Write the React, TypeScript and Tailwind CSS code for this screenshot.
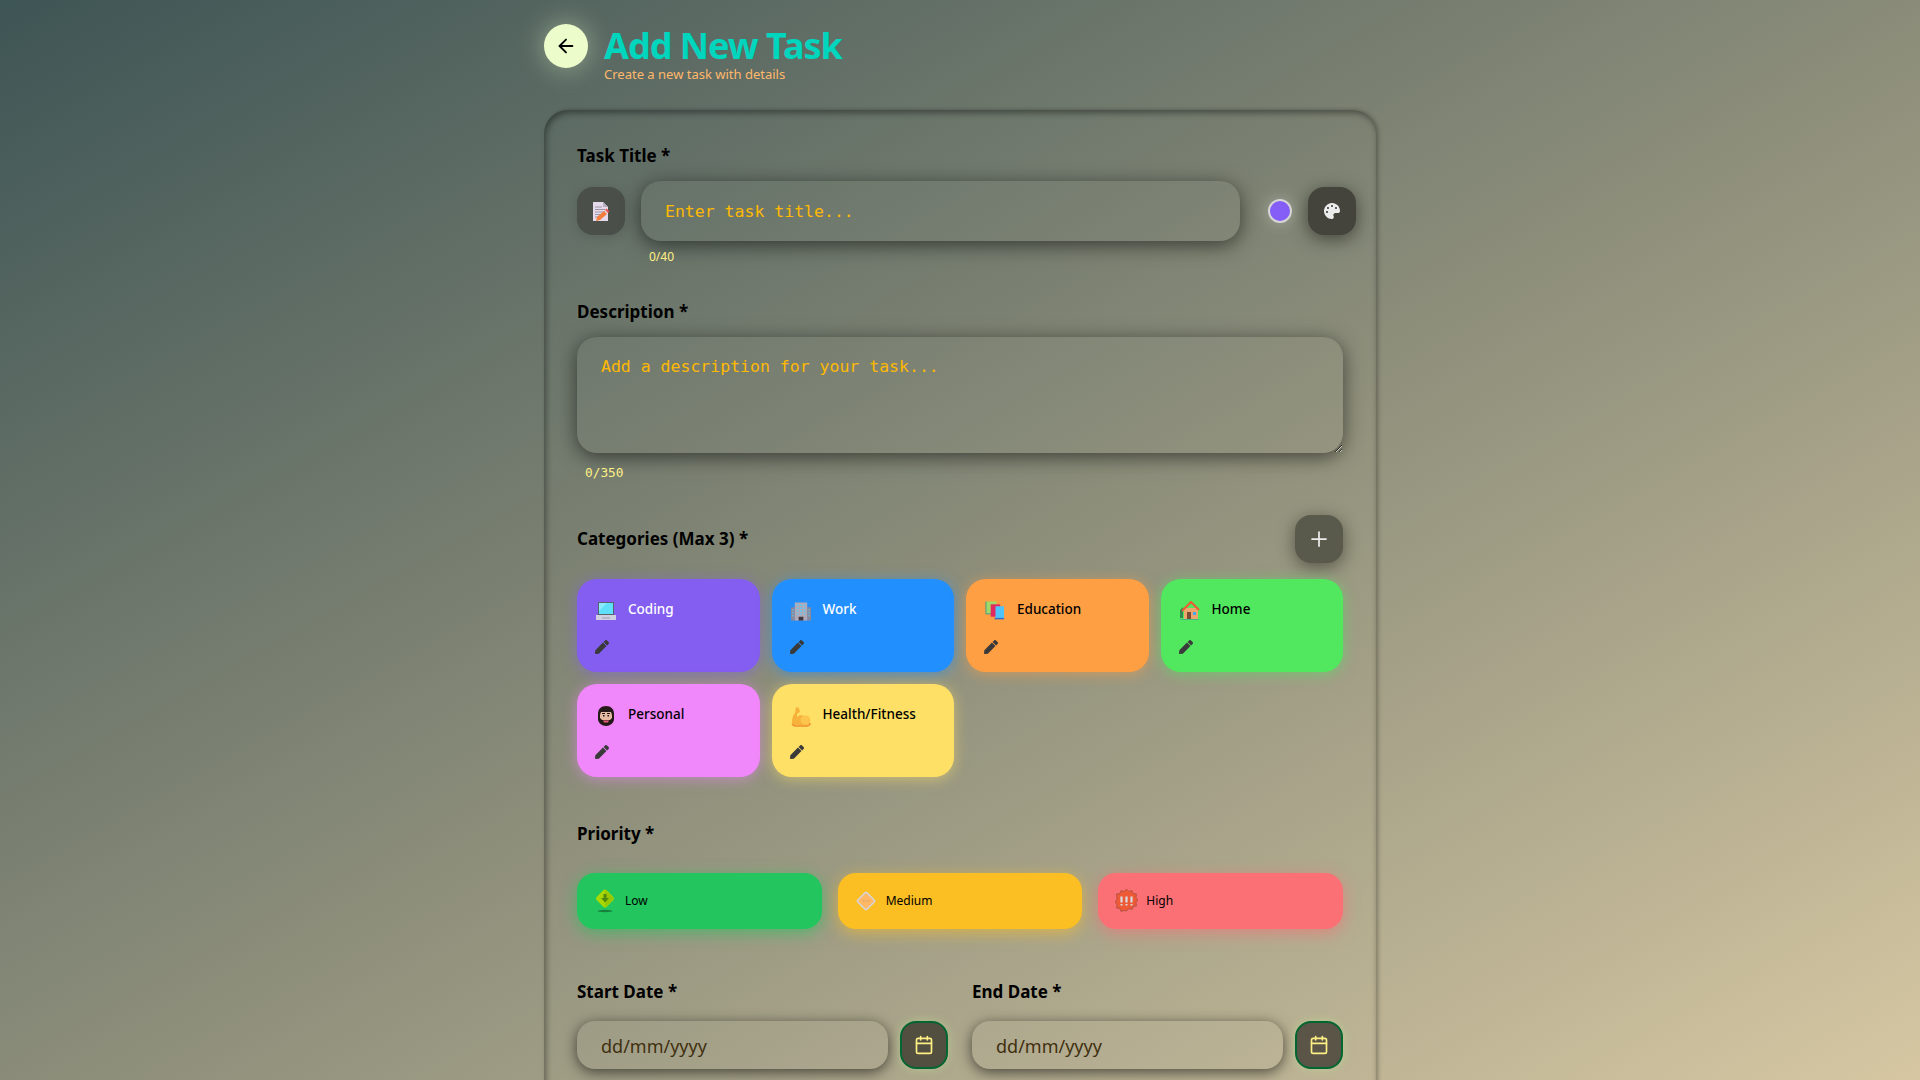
import { ArrowLeft, Calendar, Plus } from "lucide-react";
import { FaPalette, FaPen } from "react-icons/fa";
import type { ReactNode } from "react";

const sans = "font-['Noto_Sans',sans-serif]";
const mono = "font-['DejaVu_Sans_Mono',monospace]";

function MemoIcon() {
  return (
    <svg width="18" height="21" viewBox="0 0 18 21">
      <path d="M1 1h10l5 5v14H1z" fill="#e6d9ec" />
      <path d="M11 1l5 5h-5z" fill="#b9adc2" />
      <path d="M3 6h7M3 8.500h10M3 11h10M3 13.500h8M3 16h4" stroke="#9a94a3" strokeWidth="1" />
      <path d="M4 20l1-4 7-6 3 3-7 6z" fill="#f47c3c" />
      <path d="M13 9l1.500-1.500 3 3L16 12z" fill="#f0524f" />
    </svg>
  );
}

function LaptopIcon() {
  return (
    <svg width="20" height="20" viewBox="0 0 20 20">
      <rect x="2" y="1" width="16" height="13" fill="#59636e" />
      <rect x="3" y="2" width="14" height="11" fill="#5fe0fa" />
      <path d="M3 2h8L3 10z" fill="#8aeafc" />
      <path d="M0 14h20v5H0z" fill="#d0cfe0" />
      <path d="M6 17h8" stroke="#9c9bb3" strokeWidth="1" />
    </svg>
  );
}

function BuildingIcon() {
  return (
    <svg width="21" height="21" viewBox="0 0 21 21">
      <path d="M0 6h4v14H0zM17 6h4v14h-4z" fill="#8a8798" />
      <rect x="4" y="1" width="13" height="19" fill="#b0aab8" />
      <path d="M6 4h9M6 7h9M6 10h9M6 13h9" stroke="#5fc8f5" strokeWidth="1.500" strokeDasharray="2 1.500" />
      <path d="M1 9h2M1 12h2M1 15h2M18 9h2M18 12h2M18 15h2" stroke="#5fc8f5" strokeWidth="1" />
      <rect x="8" y="16" width="5" height="4" fill="#3d3848" />
    </svg>
  );
}

function BooksIcon() {
  return (
    <svg width="21" height="20" viewBox="0 0 21 20">
      <rect x="1" y="0" width="11" height="13" fill="#a2d86a" />
      <path d="M1 0v13h11" fill="none" stroke="#3f9a8a" strokeWidth="1" />
      <rect x="6" y="3" width="10" height="13" fill="#e3275f" />
      <rect x="11" y="5" width="9" height="13" fill="#4fc3f7" />
      <path d="M10 18h10" stroke="#3c68c9" strokeWidth="1.500" />
    </svg>
  );
}

function HouseIcon() {
  return (
    <svg width="20" height="20" viewBox="0 0 20 20">
      <path d="M0 9l3-3v11H0z" fill="#2f8a4f" />
      <rect x="4" y="7" width="14" height="11" fill="#eda66e" />
      <path d="M2 10l9-9 8 8" fill="none" stroke="#f05a32" strokeWidth="2" />
      <rect x="7" y="11" width="4" height="7" fill="#7a4a33" />
      <rect x="13" y="11" width="3" height="3" fill="#4aa8e8" />
      <path d="M0 18h19v1H0z" fill="#43b97f" />
    </svg>
  );
}

function FaceIcon() {
  return (
    <svg width="18" height="20" viewBox="0 0 18 20">
      <path d="M1 8C1 3 4 0 9 0s8 3 8 8v5c0 4-4 7-8 7s-8-3-8-7z" fill="#241818" />
      <path d="M3 9l1-3h10l1 3v3l-2 2H5l-2-2z" fill="#e6b9a2" />
      <rect x="5" y="7" width="3" height="1" fill="#241818" />
      <rect x="10" y="7" width="3" height="1" fill="#241818" />
      <rect x="6" y="9" width="1.500" height="1.500" fill="#241818" />
      <rect x="10.500" y="9" width="1.500" height="1.500" fill="#241818" />
      <path d="M6 14.500h6l-1 2H7z" fill="#e7607a" />
    </svg>
  );
}

function ArmIcon() {
  return (
    <svg width="20" height="21" viewBox="0 0 20 21">
      <path d="M1 16c0-4 1-7 3-9l1-6 3 1 1 4-3 2v3c2-2 5-2 7-1 4-1 6 1 6 4s-2 5-5 5H4c-2 0-3-1-3-3z" fill="#f7b23b" />
      <circle cx="14" cy="14" r="4.500" fill="#fcc64e" />
      <path d="M1 18c1 1 2 2 3 2h11c2 0 4-1 4-3" fill="none" stroke="#ef8c2e" strokeWidth="1.500" />
    </svg>
  );
}

function LowIcon() {
  return (
    <svg width="20" height="24" viewBox="0 0 20 24">
      <ellipse cx="10" cy="22" rx="7.500" ry="1.200" fill="#16803f" />
      <rect x="3" y="2.500" width="14" height="14" rx="2.500" transform="rotate(45 10 9.500)" fill="#a8d800" />
      <path d="M10 0.500l9 9-9 9z" fill="#8cb800" opacity=".5" />
      <path d="M8.500 5h3v4h2.500L10 13.500 6 9h2.500z" fill="#4f8a10" />
    </svg>
  );
}

function MediumIcon() {
  return (
    <svg width="20" height="20" viewBox="0 0 20 20">
      <rect x="3.500" y="3.500" width="13" height="13" rx="1.500" transform="rotate(45 10 10)" fill="#ffb866" stroke="#d8d4d8" strokeWidth="1.500" />
      <path d="M7 10h1.200M9.400 10h1.200M11.800 10H13" stroke="#c99a6a" strokeWidth="1.200" />
    </svg>
  );
}

function HighIcon() {
  return (
    <svg width="23" height="24" viewBox="0 0 23 24">
      <path d="M11.500 0l2.500 2.500 3-1 1 3 3.500.5-.5 3.500 2 2.500-2 2.500.5 3.500-3.500.5-1 3-3-1-2.500 2.500L9 21.500l-3 1-1-3-3.500-.5.500-3.500-2-2.500 2-2.500L1.500 5 5 4.500l1-3 3 1z" fill="#ee5a35" stroke="#a04a40" strokeWidth=".7" />
      <path d="M6.500 7.500v6M11.500 7.500v6M16.500 7.500v6" stroke="#d8dde0" strokeWidth="2.200" />
      <path d="M6.500 15v1.500M11.500 15v1.500M16.500 15v1.500" stroke="#d8dde0" strokeWidth="2" />
    </svg>
  );
}

function FieldLabel({ children }: { children: ReactNode }) {
  return <label className="block text-[17px] font-bold leading-[26px] text-black">{children}</label>;
}

function CategoryCard({ icon, name, color, light }: { icon: ReactNode; name: string; color: string; light?: boolean }) {
  return (
    <div className={`flex h-[93px] flex-col justify-between rounded-[20px] pb-[18px] pl-[19px] pr-3 pt-5 ${color}`}>
      <div className="flex items-center gap-3">
        <span className="relative top-[2px] flex w-5 justify-center">{icon}</span>
        <span className={`text-[13.500px] font-medium ${light ? "text-white" : "text-black"}`}>{name}</span>
      </div>
      <span className="-ml-[1px] text-[#3a3a3a]">
        <FaPen size={14} />
      </span>
    </div>
  );
}

function PriorityButton({ icon, name, color }: { icon: ReactNode; name: string; color: string }) {
  return (
    <button className={`flex h-14 items-center gap-2 rounded-[18px] pl-4 text-xs text-black ${color}`}>
      <span className="flex w-[24px] justify-center">{icon}</span>
      {name}
    </button>
  );
}

function DateField({ label, btn }: { label: string; btn: string }) {
  return (
    <div>
      <FieldLabel>{label}</FieldLabel>
      <div className="mt-4 flex gap-3">
        <input
          placeholder="dd/mm/yyyy"
          className="h-12 min-w-0 flex-1 rounded-[18px] bg-white/[0.02] px-6 pt-[2px] text-lg shadow-[0_3px_14px_rgba(0,0,0,0.6)] outline-none placeholder:text-[#40300f]"
        />
        <button className={`flex h-12 w-12 items-center justify-center rounded-[16px] border-2 border-green-800 text-yellow-200 shadow-[0_0_10px_rgba(190,230,150,0.5)] ${btn}`}>
          <Calendar size={20} />
        </button>
      </div>
    </div>
  );
}

export default function App() {
  return (
    <div className={`h-screen overflow-hidden bg-gradient-to-br from-[#3e5555] via-[#8a8c79] to-[#d6c7a2] ${sans}`}>
      <div className="mx-auto w-[832px]">
        <header className="flex h-[110px] items-start gap-4 pt-6">
          <button className="flex h-11 w-11 items-center justify-center rounded-full bg-lime-100 text-black shadow-[0_0_28px_rgba(236,252,202,0.45)]">
            <ArrowLeft size={22} />
          </button>
          <div>
            <h1 className="text-4xl leading-[43px] font-bold tracking-[-1px] text-teal-400">Add New Task</h1>
            <p className="text-[13px] leading-[14px] text-orange-300">Create a new task with details</p>
          </div>
        </header>

        <main className="h-[1000px] rounded-t-[24px] px-[33px] pt-[33px] shadow-[inset_2px_3px_6px_rgba(0,0,0,0.4),2px_0_4px_rgba(0,0,0,0.3)]">
          <FieldLabel>Task Title *</FieldLabel>
          <div className="-mr-[13px] mt-3 flex items-center">
            <span className="flex h-12 w-12 shrink-0 items-center justify-center rounded-[16px] bg-[#4a4f49] shadow-[0_2px_12px_rgba(0,0,0,0.15)]">
              <MemoIcon />
            </span>
            <input
              placeholder="Enter task title..."
              className={`ml-4 h-[60px] w-[599px] shrink-0 rounded-[20px] bg-white/[0.02] px-6 text-[16.500px] shadow-[0_4px_20px_rgba(0,0,0,0.55)] outline-none placeholder:text-amber-400 ${mono}`}
            />
            <span className="ml-7 h-6 w-6 shrink-0 rounded-full border-2 border-[#d6d6d6] bg-[#845ef7] shadow-[0_0_16px_rgba(255,255,255,0.3)]" />
            <button className="ml-4 flex h-12 w-12 shrink-0 items-center justify-center rounded-[16px] bg-[#44443c] text-[#ececec] shadow-[0_4px_18px_rgba(0,0,0,0.5)]">
              <FaPalette size={16} />
            </button>
          </div>
          <p className="ml-[72px] mt-2 text-xs leading-4 text-yellow-200">0/40</p>

          <div className="mt-[34px]">
            <FieldLabel>Description *</FieldLabel>
          </div>
          <textarea
            placeholder="Add a description for your task..."
            className={`mt-3 block h-[116px] w-full rounded-[20px] bg-white/[0.02] px-6 py-[18px] text-[16.500px] shadow-[0_4px_20px_rgba(0,0,0,0.55)] outline-none placeholder:text-amber-400 ${mono}`}
          />
          <p className={`ml-2 mt-3 text-[12.800px] leading-4 text-yellow-200 ${mono}`}>0/350</p>

          <div className="mt-[34px] flex items-center justify-between">
            <FieldLabel>Categories (Max 3) *</FieldLabel>
            <button className="flex h-12 w-12 items-center justify-center rounded-[16px] bg-[#5a5a4c] text-[#ececec] shadow-[0_4px_18px_rgba(0,0,0,0.45)]">
              <Plus size={24} strokeWidth={1.75} />
            </button>
          </div>
          <div className="mt-4 grid grid-cols-4 gap-3">
            <CategoryCard icon={<LaptopIcon />} name="Coding" color="bg-[#845ef0] shadow-[0_2px_14px_rgba(132,94,240,0.55)]" light />
            <CategoryCard icon={<BuildingIcon />} name="Work" color="bg-[#228fff] shadow-[0_2px_14px_rgba(34,143,255,0.55)]" light />
            <CategoryCard icon={<BooksIcon />} name="Education" color="bg-[#ff9f43] shadow-[0_2px_14px_rgba(255,159,67,0.55)]" />
            <CategoryCard icon={<HouseIcon />} name="Home" color="bg-[#51e85f] shadow-[0_2px_14px_rgba(81,232,95,0.55)]" />
            <CategoryCard icon={<FaceIcon />} name="Personal" color="bg-[#f087fa] shadow-[0_2px_14px_rgba(240,135,250,0.55)]" />
            <CategoryCard icon={<ArmIcon />} name="Health/Fitness" color="bg-[#ffe066] shadow-[0_2px_14px_rgba(255,224,102,0.55)]" />
          </div>

          <div className="mt-11">
            <FieldLabel>Priority *</FieldLabel>
          </div>
          <div className="mt-[26px] grid grid-cols-3 gap-4">
            <PriorityButton icon={<LowIcon />} name="Low" color="bg-[#22c55e] shadow-[0_4px_16px_rgba(34,197,94,0.6)]" />
            <PriorityButton icon={<MediumIcon />} name="Medium" color="bg-[#fbbf24] shadow-[0_4px_16px_rgba(251,191,36,0.6)]" />
            <PriorityButton icon={<HighIcon />} name="High" color="bg-[#fb7075] shadow-[0_4px_16px_rgba(251,112,117,0.6)]" />
          </div>

          <div className="mt-[50px] grid grid-cols-2 gap-6">
            <DateField label="Start Date *" btn="bg-[#524e40]" />
            <DateField label="End Date *" btn="bg-[#5a5547]" />
          </div>
        </main>
      </div>
    </div>
  );
}
